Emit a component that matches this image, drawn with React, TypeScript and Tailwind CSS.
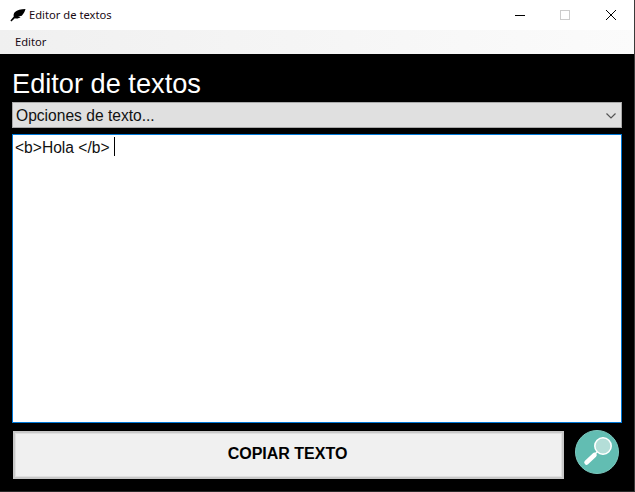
// Editor de textos - ventana de escritorio
const sans = "font-['Liberation_Sans',Arial,sans-serif]";

function Feather() {
  return (
    <svg width="16" height="13" viewBox="0 0 16 13" fill="#000">
      <path d="M15.5 0C11 0 7 1 5 3C3.6 4.4 3.4 6 3.8 7.4L0.4 11.6L1.4 12.6L4.8 9.2C7 9.8 9 9.4 10.6 8L8 7.4L11.8 6.8C13.4 5 14.8 2.6 15.5 0Z" />
    </svg>
  );
}

function TitleBar() {
  return (
    <div className="flex h-[30px] items-center bg-white">
      <div className="ml-[10px] mr-[3px] flex w-4 items-center">
        <Feather />
      </div>
      <span className="font-['Noto_Sans',sans-serif] text-[11.2px] leading-none text-[#1a0a14]">Editor de textos</span>
      <div className="ml-auto flex items-center">
        <svg width="12" height="12" viewBox="0 0 12 12" className="mr-[34px]">
          <path d="M1 6.5H11" stroke="#000" strokeWidth="1" />
        </svg>
        <div className="mr-[35px] h-[10px] w-[10px] border border-[#cccccc]" />
        <svg width="12" height="12" viewBox="0 0 12 12" className="mr-[17px]">
          <path d="M1 1L11 11M11 1L1 11" stroke="#000" strokeWidth="1" />
        </svg>
      </div>
    </div>
  );
}

function MagnifierButton() {
  return (
    <button className="h-[44px] w-[44px] rounded-full border border-[#7cc9bf] bg-[#62bdb2]">
      <svg width="42" height="42" viewBox="1 1 42 42" className="block">
        <circle cx="28" cy="16" r="8.2" fill="#b4ded8" stroke="#fff" strokeWidth="1.6" />
        <path d="M22 22L20 24" stroke="#fff" strokeWidth="1.6" />
        <path d="M19.5 25L11.5 32.5" stroke="#fff" strokeWidth="4.5" strokeLinecap="round" />
      </svg>
    </button>
  );
}

export default function App() {
  return (
    <div className={`${sans} flex h-[492px] w-[635px] flex-col overflow-hidden border-r border-b border-r-[#3a3a3a] border-b-[#2a2a2a] bg-black`}>
      <TitleBar />
      <div className="flex h-[24px] items-center bg-gradient-to-r from-[#f0f0f0] to-[#fbfbfb] pl-[15px] font-['Noto_Sans',sans-serif] text-[11.2px] text-[#1a0a14]">
        Editor
      </div>
      <div className="flex flex-1 flex-col px-3">
        <h1 className="mt-[14px] h-[34px] text-[27.2px] leading-[31px] font-normal text-white">Editor de textos</h1>
        <div className="flex h-[26px] w-[610px] items-center justify-between border border-[#a9a9a9] bg-[#e0e0e0] pt-px pr-[4px] pl-[3px] text-[15.6px] text-[#111]">
          <span>Opciones de texto...</span>
          <svg width="12" height="12" viewBox="0 0 12 12">
            <path d="M1.5 3.5L6 8L10.5 3.5" fill="none" stroke="#555" strokeWidth="1.2" />
          </svg>
        </div>
        <div className="mt-[6px] h-[289px] w-[610px] border border-[#0078d7] bg-white px-[2px] pt-[2px] text-[15.6px] leading-[21px] text-[#111]">
          <span>&lt;b&gt;Hola &lt;/b&gt; </span>
          <span className="inline-block h-[19px] w-px bg-black align-top" />
        </div>
        <div className="mt-[7px] flex items-center">
          <button className="ml-px h-[48px] w-[551px] border-2 border-[#c8c8c8] bg-[#f0f0f0] pr-[2px] pb-[2px] text-[16px] font-bold text-black shadow-[inset_0_0_0_1px_#e0e0e0]">
            COPIAR TEXTO
          </button>
          <div className="ml-[11px]">
            <MagnifierButton />
          </div>
        </div>
      </div>
    </div>
  );
}
